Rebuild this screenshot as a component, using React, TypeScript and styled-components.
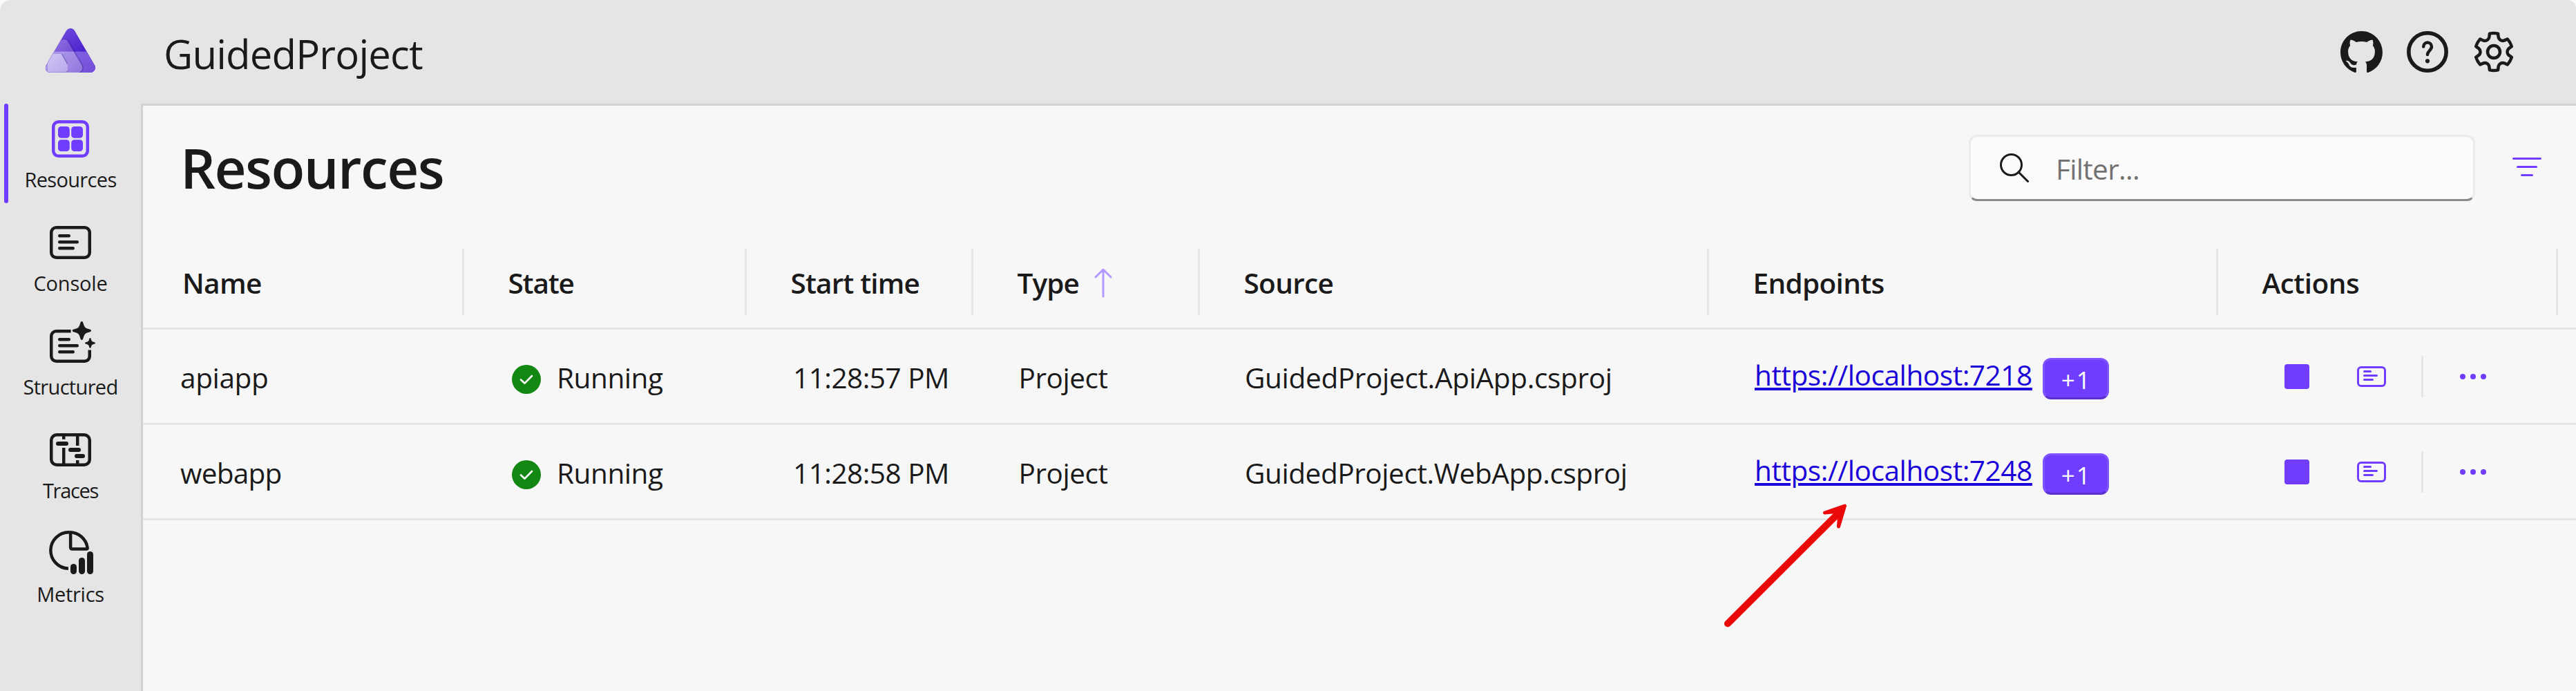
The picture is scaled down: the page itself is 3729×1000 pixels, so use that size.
import React from "react";
import styled, { createGlobalStyle } from "styled-components";

const ink = "#1a1a1a";
const accent = "#703dff";
const line = "#e5e5e5";
const chrome = "#e5e5e5";
const surface = "#f7f7f7";

const GlobalStyle = createGlobalStyle`
  * { box-sizing: border-box; }
  body {
    margin: 0;
    background: #fafafa;
    color: ${ink};
    font-family: "Open Sans", "Noto Sans", sans-serif;
  }
`;

const Shell = styled.div`
  height: 1000px;
  display: flex;
  flex-direction: column;
  background: ${chrome};
  border-radius: 16px 12px 0 0;
  overflow: hidden;
`;

const Header = styled.header`
  height: 150px;
  flex: none;
  display: flex;
  align-items: center;
  padding-right: 71px;
`;

const LogoSlot = styled.div`
  width: 204px;
  display: flex;
  justify-content: center;
  padding: 0 0 4px 0;
`;

const AppTitle = styled.div`
  flex: 1;
  padding: 6px 0 0 33px;
  font-size: 58px;
  line-height: 80px;
  letter-spacing: -0.78px;
`;

const HeaderActions = styled.div`
  display: flex;
  align-items: center;
`;

const HeaderButton = styled.a`
  width: 96px;
  height: 96px;
  display: flex;
  align-items: center;
  justify-content: center;
  color: ${ink};
`;

const Body = styled.div`
  flex: 1;
  display: flex;
  min-height: 0;
`;

const Sidebar = styled.nav`
  width: 204px;
  flex: none;
  display: flex;
  flex-direction: column;
  gap: 6px;
`;

const NavItem = styled.a<{ $active?: boolean }>`
  position: relative;
  height: 144px;
  padding-top: 15px;
  display: flex;
  flex-direction: column;
  align-items: center;
  color: ${(p) => (p.$active ? accent : ink)};

  &::before {
    content: "";
    display: ${(p) => (p.$active ? "block" : "none")};
    position: absolute;
    left: 6px;
    top: 0;
    width: 6px;
    height: 144px;
    border-radius: 3px;
    background: ${accent};
  }
`;

const NavLabel = styled.span<{ $spacing: number }>`
  margin-top: 3px;
  font-size: 29px;
  line-height: 40px;
  letter-spacing: ${(p) => p.$spacing}px;
  color: ${ink};
`;

const Main = styled.main`
  position: relative;
  flex: 1;
  min-width: 0;
  background: ${surface};
  border-top: 3px solid #d1d1d1;
  border-left: 3px solid #d1d1d1;
`;

const Toolbar = styled.div`
  height: 180px;
  display: flex;
  align-items: center;
  padding: 0 50px 0 54px;
`;

const PageTitle = styled.h1`
  flex: 1;
  margin: 0 0 3px;
  font-size: 80px;
  line-height: 110px;
  font-weight: 600;
  letter-spacing: -1.55px;
`;

const SearchBox = styled.div`
  width: 733px;
  height: 96px;
  display: flex;
  align-items: center;
  gap: 39px;
  padding-left: 42px;
  background: #fbfbfb;
  border: 3px solid #ebebeb;
  border-bottom-color: #8b8b8b;
  border-radius: 12px;
`;

const Placeholder = styled.span`
  padding-top: 3px;
  font-size: 40.5px;
  line-height: 56px;
  letter-spacing: -0.67px;
  color: #717171;
`;

const FilterButton = styled.a`
  display: flex;
  margin-left: 54px;
  color: ${accent};
`;

const columns = "465px 409px 328px 328px 737px 737px 492px";

const HeadRow = styled.div`
  display: grid;
  grid-template-columns: ${columns};
  padding: 27px 0 18px;
  border-bottom: 3px solid ${line};
`;

const HeadCell = styled.div<{ $spacing: number; $first?: boolean }>`
  height: 96px;
  display: flex;
  align-items: center;
  gap: 22px;
  padding: 3px 0 0 ${(p) => (p.$first ? 57 : 63.5)}px;
  border-right: 3px solid ${line};
  font-size: 40.5px;
  font-weight: 600;
  line-height: 56px;
  letter-spacing: ${(p) => p.$spacing}px;
`;

const Row = styled.div`
  display: grid;
  grid-template-columns: ${columns};
  height: 138px;
  border-bottom: 3px solid ${line};
`;

const Cell = styled.div<{ $inset: number; $spacing?: number; $gap?: number }>`
  display: flex;
  align-items: center;
  gap: ${(p) => p.$gap ?? 0}px;
  padding-left: ${(p) => p.$inset}px;
  font-size: 40.5px;
  line-height: 56px;
  letter-spacing: ${(p) => p.$spacing ?? 0}px;
  white-space: nowrap;
`;

const CellText = styled.span`
  padding-top: 4px;
`;

const StatusIcon = styled.svg`
  margin-top: 9px;
`;

const EndpointLink = styled.a`
  margin-bottom: 4px;
  color: #1a00d9;
  letter-spacing: -0.42px;
  text-decoration: underline;
  text-decoration-thickness: 4px;
  text-underline-offset: 3px;
`;

const MoreBadge = styled.button`
  width: 96px;
  height: 60px;
  margin: 7px 0 0 15px;
  padding: 3px 0 0 2px;
  border: 3px solid #7f52ff;
  border-bottom-color: #5a31cc;
  border-radius: 12px;
  background: ${accent};
  color: #fff;
  font-family: inherit;
  font-size: 35px;
  line-height: 48px;
  letter-spacing: 2px;
`;

const Divider = styled.span`
  width: 3px;
  height: 60px;
  margin: 0 53px 0 51px;
  background: ${line};
`;

const StopButton = styled.span`
  width: 36px;
  height: 36px;
  margin-right: 69px;
  border-radius: 4px;
  background: ${accent};
`;

const Pointer = styled.svg`
  position: absolute;
  left: 2280px;
  top: 567px;
`;

const Logo = () => (
  <svg width="72" height="64" viewBox="0 0 72 64">
    <defs>
      <linearGradient id="dark" gradientUnits="userSpaceOnUse" x1="24" y1="0" x2="50" y2="34">
        <stop offset="0" stopColor="#7049df" />
        <stop offset="1" stopColor="#4c25cc" />
      </linearGradient>
      <linearGradient id="side" gradientUnits="userSpaceOnUse" x1="40" y1="33" x2="66" y2="64">
        <stop offset="0" stopColor="#8162e2" />
        <stop offset="1" stopColor="#7450da" />
      </linearGradient>
      <linearGradient id="mid" gradientUnits="userSpaceOnUse" x1="16" y1="16" x2="36" y2="34">
        <stop offset="0" stopColor="#8d6de2" />
        <stop offset="1" stopColor="#7852d6" />
      </linearGradient>
      <linearGradient id="midLow" gradientUnits="userSpaceOnUse" x1="20" y1="34" x2="50" y2="64">
        <stop offset="0" stopColor="#ab97ea" />
        <stop offset="1" stopColor="#9279df" />
      </linearGradient>
      <linearGradient id="light" gradientUnits="userSpaceOnUse" x1="6" y1="36" x2="30" y2="64">
        <stop offset="0" stopColor="#cfc3f4" />
        <stop offset="1" stopColor="#baa9ec" />
      </linearGradient>
      <clipPath id="low">
        <rect x="0" y="33.7" width="72" height="31" />
      </clipPath>
      <filter id="shade" x="-20%" y="-20%" width="150%" height="150%">
        <feDropShadow dx="1" dy="0" stdDeviation="0.8" floodColor="#1d0a66" floodOpacity="0.55" />
      </filter>
    </defs>
    <g strokeLinejoin="round">
      <path d="M36 7 65 57H7Z" fill="url(#dark)" stroke="url(#dark)" strokeWidth="14" />
      <path d="M36 7 65 57H7Z" fill="url(#side)" stroke="url(#side)" strokeWidth="14" clipPath="url(#low)" />
      <path d="M26.6 22.8 46.4 57.2H7Z" fill="url(#mid)" stroke="url(#mid)" strokeWidth="13.6" filter="url(#shade)" />
      <path d="M26.6 22.8 46.4 57.2H7Z" fill="url(#midLow)" stroke="url(#midLow)" strokeWidth="13.6" clipPath="url(#low)" />
      <path d="M16.6 40.4 26.2 57.2H7Z" fill="url(#light)" stroke="url(#light)" strokeWidth="13.6" filter="url(#shade)" />
    </g>
  </svg>
);

const GitHubIcon = () => (
  <svg width="61" height="60" viewBox="0 0 97.7 96" fill="currentColor">
    <path d="M48.854 0C21.839 0 0 22 0 49.217c0 21.756 13.993 40.172 33.405 46.69 2.427.49 3.316-1.059 3.316-2.362 0-1.141-.08-5.052-.08-9.127-13.59 2.934-16.42-5.867-16.42-5.867-2.184-5.704-5.42-7.17-5.42-7.17-4.448-3.015.324-3.015.324-3.015 4.934.326 7.523 5.052 7.523 5.052 4.367 7.496 11.404 5.378 14.235 4.074.404-3.178 1.699-5.378 3.074-6.6-10.839-1.141-22.243-5.378-22.243-24.283 0-5.378 1.94-9.778 5.014-13.2-.485-1.222-2.184-6.275.486-13.038 0 0 4.125-1.304 13.426 5.052a46.97 46.97 0 0 1 12.214-1.63c4.125 0 8.33.571 12.213 1.63 9.302-6.356 13.427-5.052 13.427-5.052 2.67 6.763.97 11.816.485 13.038 3.155 3.422 5.015 7.822 5.015 13.2 0 18.905-11.404 23.06-22.324 24.283 1.78 1.548 3.316 4.481 3.316 9.126 0 6.6-.08 11.897-.08 13.526 0 1.304.89 2.853 3.316 2.364 19.412-6.52 33.405-24.935 33.405-46.691C97.707 22 75.788 0 48.854 0z" />
  </svg>
);

const HelpIcon = () => (
  <svg width="60" height="60" viewBox="0 0 60 60" fill="none" stroke="currentColor" strokeLinecap="round">
    <circle cx="30" cy="30" r="27.2" strokeWidth="5.6" />
    <path d="M24.2 22.6a5.9 6.2 0 0 1 11.8 0c0 5-6 6.2-6 11.4" strokeWidth="4.5" />
    <circle cx="30" cy="43.3" r="3.1" fill="currentColor" stroke="none" />
  </svg>
);

const SettingsIcon = () => (
  <svg width="72" height="72" viewBox="0 0 24 24" fill="currentColor">
    <path d="M12.01 2.25c.74 0 1.47.1 2.18.25.32.07.55.33.59.65l.17 1.53a1.38 1.38 0 0 0 1.92 1.11l1.4-.61c.3-.13.64-.06.85.17a9.8 9.8 0 0 1 2.2 3.8c.1.3 0 .63-.26.82l-1.25.92a1.38 1.38 0 0 0 0 2.22l1.25.92c.26.19.36.52.27.82a9.8 9.8 0 0 1-2.2 3.8.75.75 0 0 1-.85.17l-1.4-.62a1.38 1.38 0 0 0-1.93 1.12l-.17 1.52a.75.75 0 0 1-.58.65 9.52 9.52 0 0 1-4.4 0 .75.75 0 0 1-.57-.65l-.17-1.52a1.38 1.38 0 0 0-1.93-1.11l-1.4.62a.75.75 0 0 1-.85-.18 9.8 9.8 0 0 1-2.2-3.8c-.1-.3 0-.63.27-.82l1.24-.92a1.38 1.38 0 0 0 0-2.22l-1.24-.92a.75.75 0 0 1-.28-.82 9.8 9.8 0 0 1 2.2-3.8c.23-.23.57-.3.86-.17l1.4.62c.4.17.86.15 1.25-.08.38-.22.63-.6.68-1.04l.17-1.53a.75.75 0 0 1 .58-.65c.72-.16 1.45-.24 2.2-.25Zm0 1.5c-.45 0-.9.04-1.35.12l-.11.97a2.89 2.89 0 0 1-4.03 2.33l-.9-.4A8.3 8.3 0 0 0 4.28 9.1l.8.59a2.88 2.88 0 0 1 0 4.64l-.8.59a8.3 8.3 0 0 0 1.35 2.32l.9-.4a2.88 2.88 0 0 1 4.02 2.33l.11.99c.9.15 1.8.15 2.7 0l.1-.99a2.88 2.88 0 0 1 4.02-2.32l.9.4a8.3 8.3 0 0 0 1.36-2.33l-.8-.59a2.88 2.88 0 0 1 0-4.64l.8-.59a8.3 8.3 0 0 0-1.35-2.32l-.9.4a2.88 2.88 0 0 1-4.02-2.32l-.11-.98c-.45-.08-.9-.12-1.35-.12ZM12 8.25a3.75 3.75 0 1 1 0 7.5 3.75 3.75 0 0 1 0-7.5Zm0 1.5a2.25 2.25 0 1 0 0 4.5 2.25 2.25 0 0 0 0-4.5Z" />
  </svg>
);

const NavSvg = ({ children }: { children: React.ReactNode }) => (
  <svg width="72" height="72" viewBox="0 0 24 24" fill="none" stroke="currentColor" strokeWidth="1.5">
    {children}
  </svg>
);

const ResourcesIcon = () => (
  <NavSvg>
    <rect x="3.75" y="3.75" width="16.5" height="16.5" rx="2.5" />
    <g fill="currentColor" stroke="none">
      <rect x="6" y="6" width="5.6" height="5.6" rx="1.5" />
      <rect x="12.4" y="6" width="5.6" height="5.6" rx="1.5" />
      <rect x="6" y="12.4" width="5.6" height="5.6" rx="1.5" />
      <rect x="12.4" y="12.4" width="5.6" height="5.6" rx="1.5" />
    </g>
  </NavSvg>
);

const TextLines = () => (
  <path d="M6.75 8.75h4.5M6.75 11.75h8.5M6.75 14.75h6.5" strokeLinecap="round" />
);

const ConsoleIcon = () => (
  <NavSvg>
    <rect x="2.75" y="4.75" width="18.5" height="14.5" rx="2.4" />
    <TextLines />
  </NavSvg>
);

const StructuredIcon = () => (
  <NavSvg>
    <path d="M12.2 4.75H5.15a2.4 2.4 0 0 0-2.4 2.4v9.7a2.4 2.4 0 0 0 2.4 2.4h13.7a2.4 2.4 0 0 0 2.4-2.4v-3" />
    <TextLines />
    <g fill="currentColor" stroke="none">
      <path d="M17.45 0c.35 0 .5.25.6.55l.55 1.6a2 2 0 0 0 1.25 1.25l1.6.55c.3.1.55.25.55.55s-.25.45-.55.55l-1.6.55a2 2 0 0 0-1.25 1.25l-.55 1.6c-.1.3-.25.55-.6.55s-.5-.25-.6-.55l-.55-1.6a2 2 0 0 0-1.25-1.25l-1.6-.55c-.3-.1-.55-.25-.55-.55s.25-.45.55-.55l1.6-.55a2 2 0 0 0 1.25-1.25l.55-1.6c.1-.3.25-.55.6-.55Z" />
      <path d="M21.5 8c.2 0 .3.15.35.3l.3.95c.1.3.3.5.6.6l.95.3c.2.05.3.15.3.35s-.1.3-.3.35l-.95.3c-.3.1-.5.3-.6.6l-.3.95c-.05.15-.15.3-.35.3s-.3-.15-.35-.3l-.3-.95a.95.95 0 0 0-.6-.6l-.95-.3c-.2-.05-.3-.15-.3-.35s.1-.3.3-.35l.95-.3c.3-.1.5-.3.6-.6l.3-.95c.05-.15.15-.3.35-.3Z" />
    </g>
  </NavSvg>
);

const TracesIcon = () => (
  <NavSvg>
    <rect x="2.75" y="4.75" width="18.5" height="14.5" rx="2.6" />
    <path d="M8.75 4.75V6.9M8.75 11v8.25M15.4 4.75V10M15.4 17v2.25" />
    <path d="M6 9h4M12 12h4M15 15h3" strokeWidth="2" strokeLinecap="round" />
  </NavSvg>
);

const MetricsIcon = () => (
  <NavSvg>
    <path d="M11 19.25A8.75 8.75 0 0 1 11.4 1.75" />
    <path d="M11.4 1.75A8.75 8.75 0 0 1 20.2 9.3q.05.55-.5.55H12.9q-.85 0-.85-.85V1.75" />
    <g fill="currentColor" stroke="none">
      <rect x="12" y="17" width="3" height="5" rx="1.5" />
      <rect x="16" y="14" width="3" height="8" rx="1.5" />
      <rect x="20" y="11" width="3" height="11" rx="1.5" />
    </g>
  </NavSvg>
);

const SearchIcon = () => (
  <svg width="42" height="42" viewBox="0 0 42 42" fill="none" stroke={ink} strokeWidth="3">
    <circle cx="16.5" cy="16.5" r="15" />
    <path d="m27 27 13.5 13.5" strokeLinecap="round" />
  </svg>
);

const FilterIcon = () => (
  <svg width="42" height="30" viewBox="0 0 42 30" fill="none" stroke="currentColor" strokeWidth="3" strokeLinecap="round">
    <path d="M1.5 1.5h39M7.5 13.5h27M13.5 25.5h15" />
  </svg>
);

const SortArrow = () => (
  <svg width="26" height="44" viewBox="0 0 26 44" fill="none" stroke="#b399ff" strokeWidth="3" strokeLinecap="round" strokeLinejoin="round">
    <path d="M13 41V2M2 13 13 2l11 11" />
  </svg>
);

const CheckIcon = () => (
  <StatusIcon width="42" height="42" viewBox="0 0 42 42">
    <circle cx="21" cy="21" r="21" fill="#128712" />
    <path d="m13 21.5 5.6 5.2L29 16" fill="none" stroke="#fff" strokeWidth="2.6" strokeLinecap="round" strokeLinejoin="round" />
  </StatusIcon>
);

const LogsIcon = () => (
  <svg width="42" height="30" viewBox="0 0 42 30" fill="none" stroke={accent} strokeWidth="3">
    <rect x="1.5" y="1.5" width="39" height="27" rx="4.5" />
    <path d="M10.5 7.5h9M10.5 13.5h18M10.5 19.5h12" strokeLinecap="round" />
  </svg>
);

const MoreIcon = () => (
  <svg width="38" height="8" viewBox="0 0 38 8" fill={accent}>
    <circle cx="4" cy="4" r="4" />
    <circle cx="19" cy="4" r="4" />
    <circle cx="34" cy="4" r="4" />
  </svg>
);

const navItems = [
  { label: "Resources", spacing: -0.66, icon: <ResourcesIcon />, active: true },
  { label: "Console", spacing: -0.18, icon: <ConsoleIcon /> },
  { label: "Structured", spacing: -0.67, icon: <StructuredIcon /> },
  { label: "Traces", spacing: -1.3, icon: <TracesIcon /> },
  { label: "Metrics", spacing: -0.29, icon: <MetricsIcon /> },
];

const headings = [
  { label: "Name", spacing: -0.62 },
  { label: "State", spacing: -1.2 },
  { label: "Start time", spacing: -0.86 },
  { label: "Type", spacing: -0.92, sorted: true },
  { label: "Source", spacing: -0.66 },
  { label: "Endpoints", spacing: -0.69 },
  { label: "Actions", spacing: -0.52 },
];

const resources = [
  {
    name: "apiapp",
    nameSpacing: -0.36,
    time: "11:28:57 PM",
    source: "GuidedProject.ApiApp.csproj",
    sourceSpacing: -0.33,
    url: "https://localhost:7218",
  },
  {
    name: "webapp",
    nameSpacing: -0.74,
    time: "11:28:58 PM",
    source: "GuidedProject.WebApp.csproj",
    sourceSpacing: -0.42,
    url: "https://localhost:7248",
  },
];

export default function App() {
  return (
    <>
      <GlobalStyle />
      <Shell>
        <Header>
          <LogoSlot><Logo /></LogoSlot>
          <AppTitle>GuidedProject</AppTitle>
          <HeaderActions>
            <HeaderButton><GitHubIcon /></HeaderButton>
            <HeaderButton><HelpIcon /></HeaderButton>
            <HeaderButton><SettingsIcon /></HeaderButton>
          </HeaderActions>
        </Header>
        <Body>
          <Sidebar>
            {navItems.map((item) => (
              <NavItem key={item.label} $active={item.active}>
                {item.icon}
                <NavLabel $spacing={item.spacing}>{item.label}</NavLabel>
              </NavItem>
            ))}
          </Sidebar>
          <Main>
            <Toolbar>
              <PageTitle>Resources</PageTitle>
              <SearchBox>
                <SearchIcon />
                <Placeholder>Filter...</Placeholder>
              </SearchBox>
              <FilterButton><FilterIcon /></FilterButton>
            </Toolbar>
            <HeadRow>
              {headings.map((h, i) => (
                <HeadCell key={h.label} $spacing={h.spacing} $first={i === 0}>
                  {h.label}
                  {h.sorted && <SortArrow />}
                </HeadCell>
              ))}
            </HeadRow>
            {resources.map((r) => (
              <Row key={r.name}>
                <Cell $inset={54} $spacing={r.nameSpacing}><CellText>{r.name}</CellText></Cell>
                <Cell $inset={69} $spacing={-0.43} $gap={23}>
                  <CheckIcon />
                  <CellText>Running</CellText>
                </Cell>
                <Cell $inset={67} $spacing={-0.51}><CellText>{r.time}</CellText></Cell>
                <Cell $inset={65.5} $spacing={-0.44}><CellText>Project</CellText></Cell>
                <Cell $inset={65} $spacing={r.sourceSpacing}><CellText>{r.source}</CellText></Cell>
                <Cell $inset={66}>
                  <EndpointLink>{r.url}</EndpointLink>
                  <MoreBadge>+1</MoreBadge>
                </Cell>
                <Cell $inset={96}>
                  <StopButton />
                  <LogsIcon />
                  <Divider />
                  <MoreIcon />
                </Cell>
              </Row>
            ))}
            <Pointer width="200" height="200" viewBox="0 0 200 200" fill="none" stroke="#eb0808" strokeLinecap="round" strokeLinejoin="round">
              <path d="M14 182.500 172 25" strokeWidth="10" />
              <path d="M154.500 22 183.500 12 174.500 42 176 20Z" fill="#eb0808" strokeWidth="5" />
            </Pointer>
          </Main>
        </Body>
      </Shell>
    </>
  );
}
